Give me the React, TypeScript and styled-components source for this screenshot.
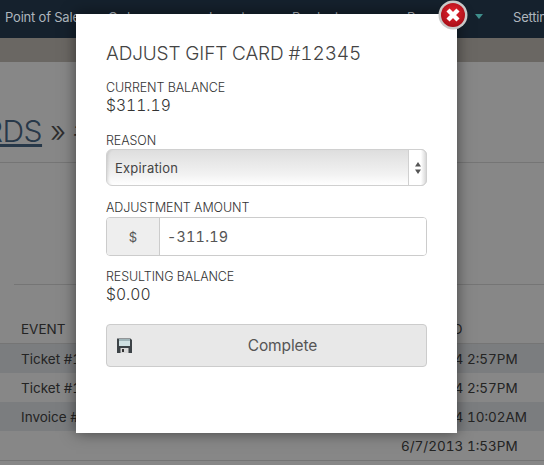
import React from 'react';
import styled,{createGlobalStyle} from 'styled-components';

const Global = createGlobalStyle`
	html,body{
		margin:0;
		padding:0;
		background:#fff;
	}
	body{
		font-family:"Inter","Liberation Sans",sans-serif;
		color:#333;
	}
`
const Page = styled.div`
	position:relative;
	width:544px;
	height:465px;
	overflow:hidden;
`
const Nav = styled.nav`
	position:relative;
	z-index:2;
	display:flex;
	align-items:center;
	height:38px;
	padding-left:5px;
	background:#15212d;
	color:#aeb6bd;
	font-size:13px;
	letter-spacing:-0.2px;
	white-space:nowrap;
`
const NavItem = styled.span<{$w:number}>`
	flex:none;
	width:${p=>p.$w}px;
	padding-bottom:4px;
`
const Caret = styled.span`
	position:absolute;
	left:475px;
	top:14px;
	border-style:solid;
	border-width:5px 4.5px 0;
	border-color:#3f8f8c transparent transparent;
`
const Band = styled.div`
	height:24px;
	background:#c9c3bb;
`
const Content = styled.div`
	padding-top:38px;
`
const Heading = styled.h1`
	margin:0;
	height:62px;
	border-bottom:1px solid #ddd;
	font-size:30px;
	font-weight:300;
	letter-spacing:-0.5px;
	line-height:62px;
	white-space:nowrap;
	color:#555;
	a{
		margin-left:-16px;
		color:#4a6a8a;
		text-decoration:underline;
	}
`
const Rule = styled.div`
	height:0;
	margin:121px 0 0 14px;
	border-top:1px solid #ddd;
`
const Table = styled.div`
	margin-top:29px;
	font-size:13.5px;
	font-variant-numeric:tabular-nums;
	color:#444;
`
const Row = styled.div<{$shade?:boolean;$head?:boolean}>`
	display:grid;
	grid-template-columns:380px 1fr;
	align-items:center;
	height:29px;
	padding-left:21px;
	background:${p=>p.$shade?'#e9ecf0':'transparent'};
	border-bottom:${p=>p.$head?'1px solid #ddd':'none'};
	white-space:nowrap;
`
const Backdrop = styled.div`
	position:absolute;
	z-index:1;
	inset:0;
	background:rgba(0,0,0,.47);
`
const Modal = styled.div`
	position:absolute;
	z-index:3;
	left:76px;
	top:14px;
	box-sizing:border-box;
	width:381px;
	height:419px;
	padding:28px 30px 0;
	background:#fff;
	box-shadow:0 0 14px rgba(0,0,0,.5);
	color:#555;
`
const Title = styled.h2`
	margin:0 0 14px;
	font-size:19px;
	line-height:24px;
	font-weight:300;
	letter-spacing:-0.15px;
	font-variant-numeric:tabular-nums;
	color:#444;
`
const Label = styled.label`
	display:block;
	font-size:12.5px;
	line-height:16px;
	font-weight:300;
	letter-spacing:-0.1px;
	color:#333;
`
const Amount = styled.div`
	font-size:15.7px;
	line-height:20px;
	font-weight:300;
	font-variant-numeric:tabular-nums;
	color:#333;
`
const Field = styled.div<{$gap:number}>`
	margin-bottom:${p=>p.$gap}px;
`
const SelectWrap = styled.div`
	position:relative;
`
const Select = styled.select`
	display:block;
	box-sizing:border-box;
	width:321px;
	height:37px;
	padding:0 0 0 8px;
	appearance:none;
	border:1px solid #d0d0d0;
	border-radius:6px;
	outline:none;
	background:linear-gradient(#dedede,#f2f2f2 70%,#fff);
	box-shadow:inset 3px 0 3px -2px rgba(0,0,0,.12);
	font:13px "Inter","Liberation Sans",sans-serif;
	letter-spacing:.2px;
	color:#444;
`
const Stepper = styled.span`
	position:absolute;
	right:0;
	top:0;
	display:flex;
	align-items:center;
	justify-content:center;
	box-sizing:border-box;
	width:19px;
	height:37px;
	border:1px solid #d0d0d0;
	border-radius:0 6px 6px 0;
	background:linear-gradient(90deg,#fff 70%,#d8d8d8);
`
const InputGroup = styled.div`
	display:flex;
	box-sizing:border-box;
	width:321px;
	height:39px;
	margin-top:1px;
	border:1px solid #ccc;
	border-radius:4px;
	overflow:hidden;
`
const Addon = styled.span`
	display:flex;
	align-items:center;
	justify-content:center;
	flex:none;
	width:52px;
	border-right:1px solid #ccc;
	background:#eee;
	font-size:13px;
	color:#555;
`
const Input = styled.input`
	flex:1;
	min-width:0;
	padding:0 7px;
	border:none;
	outline:none;
	font:14.4px "Inter","Liberation Sans",sans-serif;
	font-variant-numeric:tabular-nums;
	letter-spacing:.2px;
	color:#555;
`
const Button = styled.button`
	position:relative;
	display:block;
	box-sizing:border-box;
	width:321px;
	height:43px;
	padding:0 0 0 32px;
	border:1px solid #ccc;
	border-radius:4px;
	background:#e8e8e8;
	font:15.5px "Inter","Liberation Sans",sans-serif;
	letter-spacing:-0.1px;
	color:#555;
`
const ButtonIcon = styled.svg`
	position:absolute;
	left:10px;
	top:13px;
`
const CloseIcon = styled.svg`
	position:absolute;
	z-index:4;
	left:438px;
	top:0;
`

function App() {
	return(
		<>
			<Global/>
			<Page>
				<Nav>
					<NavItem $w={103}>Point of Sale</NavItem>
					<NavItem $w={101}>Orders</NavItem>
					<NavItem $w={83}>Inventory</NavItem>
					<NavItem $w={115}>Products</NavItem>
					<NavItem $w={106}>Reports</NavItem>
					<NavItem $w={30}>Settings</NavItem>
					<Caret/>
				</Nav>
				<Band/>
				<Content>
					<Heading><a>RDS</a> » #12345</Heading>
					<Rule/>
					<Table>
						<Row $head><span>EVENT</span><span>CREATED</span></Row>
						<Row $shade><span>Ticket #1001</span><span>6/4/2014 2:57PM</span></Row>
						<Row><span>Ticket #1002</span><span>6/4/2014 2:57PM</span></Row>
						<Row $shade><span>Invoice #1003</span><span>6/4/2014 10:02AM</span></Row>
						<Row $head><span></span><span>6/7/2013 1:53PM</span></Row>
					</Table>
				</Content>
				<Backdrop/>
				<Modal>
					<Title>ADJUST GIFT CARD #12345</Title>
					<Field $gap={17}>
						<Label>CURRENT BALANCE</Label>
						<Amount>$311.19</Amount>
					</Field>
					<Field $gap={14}>
						<Label>REASON</Label>
						<SelectWrap>
							<Select defaultValue="Expiration">
								<option>Expiration</option>
							</Select>
							<Stepper>
								<svg width="8" height="14" viewBox="0 0 8 14">
									<path d="M4 1 7 5.5H1zM4 13 1 8.5H7z" fill="#555"/>
								</svg>
							</Stepper>
						</SelectWrap>
					</Field>
					<Field $gap={13}>
						<Label>ADJUSTMENT AMOUNT</Label>
						<InputGroup>
							<Addon>$</Addon>
							<Input value="-311.19" readOnly/>
						</InputGroup>
					</Field>
					<Field $gap={19}>
						<Label>RESULTING BALANCE</Label>
						<Amount>$0.00</Amount>
					</Field>
					<Button>
						<ButtonIcon width="15" height="15" viewBox="0 0 15 15">
							<path d="M0 .5h13.5L15 2v13H0z" fill="#3d4347"/>
							<rect x="2" y="1" width="11" height="7" fill="#cfe0e2"/>
							<rect x="2" y="1" width="11" height="2" fill="#9fb4b8"/>
							<rect x="3.5" y="10" width="8" height="5" fill="#d8d8d8"/>
							<rect x="5" y="11" width="2" height="3" fill="#333"/>
						</ButtonIcon>
						Complete
					</Button>
				</Modal>
				<CloseIcon width="30" height="30" viewBox="0 0 30 30">
					<defs>
						<radialGradient id="red" cx="50%" cy="40%" r="60%">
							<stop offset="0" stopColor="#e8232f"/>
							<stop offset="1" stopColor="#a80f18"/>
						</radialGradient>
					</defs>
					<circle cx="15" cy="15" r="14.5" fill="#c9c9c9"/>
					<circle cx="15" cy="15" r="12" fill="url(#red)"/>
					<path d="M10 10 20 20M20 10 10 20" stroke="#fff" strokeWidth="4.4"/>
				</CloseIcon>
			</Page>
		</>
	)
}

export default App;
